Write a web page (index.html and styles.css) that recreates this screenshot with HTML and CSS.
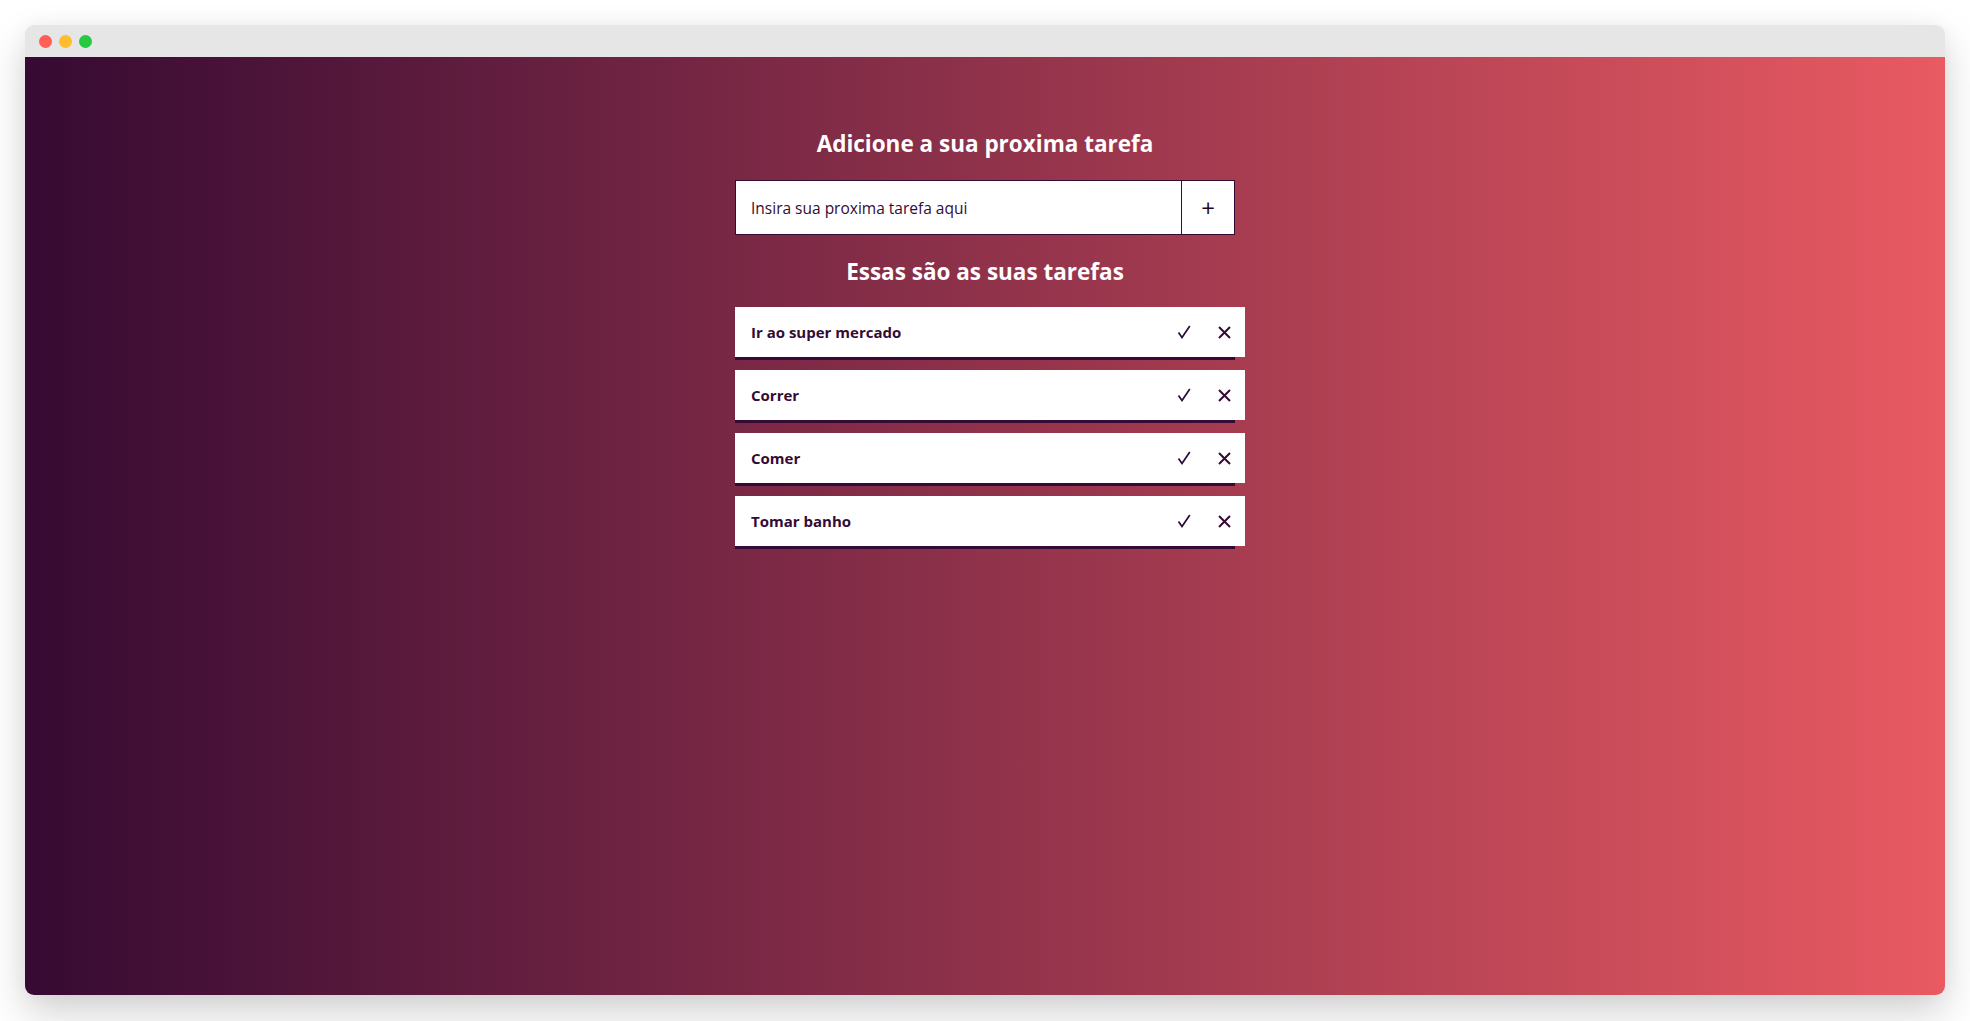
FILE: index.html
```html
<!DOCTYPE html>
<html lang="pt">
<head>
<meta charset="utf-8">
<title>Tarefas</title>
<link rel="stylesheet" href="styles.css">
</head>
<body>
<div class="window">
  <div class="titlebar">
    <span class="dot red"></span>
    <span class="dot yellow"></span>
    <span class="dot green"></span>
  </div>
  <main class="content">
    <section class="app">
      <h1 class="heading">Adicione a sua proxima tarefa</h1>
      <form class="add-form">
        <input class="add-input" type="text" placeholder="Insira sua proxima tarefa aqui">
        <button class="add-btn" type="button">+</button>
      </form>
      <h2 class="heading heading-list">Essas são as suas tarefas</h2>
      <ul class="tasks">
        <li class="task"><div class="task-body"><span class="task-text">Ir ao super mercado</span><span class="task-actions"><svg class="icon-check" viewBox="0 0 14 14"><path d="M1.5 7.5 L5 12.5 L12.8 1"/></svg><svg class="icon-x" viewBox="0 0 13 13"><path d="M1 1 L12 12 M12 1 L1 12"/></svg></span></div></li>
        <li class="task"><div class="task-body"><span class="task-text">Correr</span><span class="task-actions"><svg class="icon-check" viewBox="0 0 14 14"><path d="M1.5 7.5 L5 12.5 L12.8 1"/></svg><svg class="icon-x" viewBox="0 0 13 13"><path d="M1 1 L12 12 M12 1 L1 12"/></svg></span></div></li>
        <li class="task"><div class="task-body"><span class="task-text">Comer</span><span class="task-actions"><svg class="icon-check" viewBox="0 0 14 14"><path d="M1.5 7.5 L5 12.5 L12.8 1"/></svg><svg class="icon-x" viewBox="0 0 13 13"><path d="M1 1 L12 12 M12 1 L1 12"/></svg></span></div></li>
        <li class="task"><div class="task-body"><span class="task-text">Tomar banho</span><span class="task-actions"><svg class="icon-check" viewBox="0 0 14 14"><path d="M1.5 7.5 L5 12.5 L12.8 1"/></svg><svg class="icon-x" viewBox="0 0 13 13"><path d="M1 1 L12 12 M12 1 L1 12"/></svg></span></div></li>
      </ul>
    </section>
  </main>
</div>
</body>
</html>
```

FILE: styles.css
```css
* { box-sizing: border-box; }
html, body { margin: 0; padding: 0; }
body {
  background: #ffffff;
  padding: 25px;
  font-family: "Open Sans", "Noto Sans", sans-serif;
  height: 1021px;
  overflow: hidden;
}
.window {
  width: 1920px;
  height: 970px;
  border-radius: 9px;
  overflow: hidden;
  box-shadow: 0 18px 40px rgba(0,0,0,0.18), 0 0 20px rgba(0,0,0,0.04);
  display: flex;
  flex-direction: column;
}
.titlebar {
  height: 32px;
  background: #e6e6e6;
  display: flex;
  align-items: center;
  gap: 7px;
  padding-left: 14px;
  flex-shrink: 0;
}
.dot {
  width: 13px;
  height: 13px;
  border-radius: 50%;
}
.red { background: #ff5f57; }
.yellow { background: #febc2e; }
.green { background: #28c840; }
.content {
  flex: 1;
  background: linear-gradient(to right, #360a33, #e95a62);
  display: flex;
  justify-content: center;
}
.app {
  width: 500px;
  padding-top: 72px;
  display: flex;
  flex-direction: column;
  align-items: stretch;
}
.heading {
  margin: 0;
  color: #ffffff;
  font-size: 22.5px;
  font-weight: 700;
  text-align: center;
  line-height: 30px;
}
.add-form {
  margin: 21px 0 0;
  display: flex;
  height: 55px;
  border: 1px solid #330b35;
  background: #fff;
}
.add-input {
  flex: 1;
  border: none;
  outline: none;
  padding: 0 0 0 15px;
  font-family: inherit;
  font-size: 15.5px;
  color: #330b35;
  background: #fff;
}
.add-input::placeholder { color: #330b35; opacity: 1; }
.add-btn {
  width: 53px;
  border: none;
  border-left: 1px solid #330b35;
  background: #fff;
  font-family: inherit;
  font-size: 24px;
  color: #1a0a1f;
  padding: 0;
  line-height: 1;
}
.heading-list {
  margin-top: 22px;
}
.tasks {
  list-style: none;
  margin: 20px 0 0;
  padding: 0;
  display: flex;
  flex-direction: column;
  gap: 10px;
}
.task {
  border-bottom: 3px solid #330b35;
  display: flex;
}
.task-body {
  width: 510px;
  flex-shrink: 0;
  height: 50px;
  background: #ffffff;
  display: flex;
  align-items: center;
  justify-content: space-between;
  padding: 0 14px 0 16px;
  margin-right: -10px;
}
.task-text {
  font-size: 15px;
  font-weight: 700;
  color: #330b35;
}
.task-actions {
  display: flex;
  align-items: center;
  gap: 27px;
}
.icon-check {
  width: 14px;
  height: 14px;
  fill: none;
  stroke: #2a0a3a;
  stroke-width: 1.7;
}
.icon-x {
  width: 13px;
  height: 13px;
  fill: none;
  stroke: #330b35;
  stroke-width: 2;
}
```
